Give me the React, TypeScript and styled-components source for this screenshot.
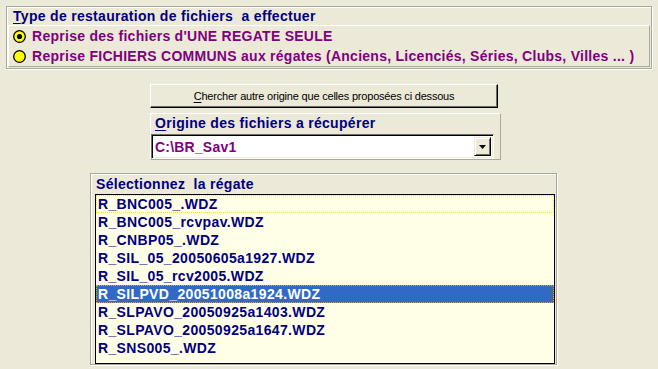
import React, { FC } from 'react';
import styled, { createGlobalStyle } from 'styled-components';

const Colors = {
    face: '#ECE9D8',
    shadow: '#ACA899',
    dark: '#716F64',
    white: '#FFFFFF',
    navy: '#000080',
    purple: '#800080',
    listBg: '#FFFFE8',
    select: '#316AC5',
};

const GlobalStyle = createGlobalStyle`
    html, body {
        margin:0;
        padding:0;
        background:${Colors.face};
    }
    * {
        box-sizing:border-box;
    }
`;

const Page = styled.div`
    width:658px;
    height:369px;
    background-color:${Colors.face};
    padding:6px 0 0 6px;
    display:flex;
    flex-direction:column;
    font-family:"Liberation Sans", Arial, sans-serif;
    overflow:hidden;
`;

const Etched = styled.div<{ $w: number; $h: number; $left?: number; $top?: number }>`
    width:${p => p.$w}px;
    height:${p => p.$h}px;
    margin-left:${p => p.$left || 0}px;
    margin-top:${p => p.$top || 0}px;
    border:1px solid ${Colors.shadow};
    box-shadow:1px 1px 0 ${Colors.white}, inset 1px 1px 0 ${Colors.white};
    display:flex;
    flex-direction:column;
    flex-shrink:0;
`;

const Raised = styled.div<{ $w: number; $h: number; $left?: number; $top?: number }>`
    width:${p => p.$w}px;
    height:${p => p.$h}px;
    margin-left:${p => p.$left || 0}px;
    margin-top:${p => p.$top || 0}px;
    border-top:1px solid ${Colors.white};
    border-left:1px solid ${Colors.white};
    border-right:1px solid ${Colors.shadow};
    border-bottom:1px solid ${Colors.shadow};
    display:flex;
    flex-direction:column;
    flex-shrink:0;
`;

const GroupTitle = styled.div<{ $left: number; $top: number }>`
    margin:${p => p.$top}px 0 0 ${p => p.$left}px;
    height:14px;
    line-height:14px;
    font-size:14px;
    letter-spacing:0.3px;
    font-weight:bold;
    color:${Colors.navy};
    white-space:pre;
    u {
        text-decoration-thickness:1px;
        text-underline-offset:2px;
    }
`;

const RadioRow = styled.div`
    height:20px;
    display:flex;
    align-items:center;
    gap:6px;
    padding-left:4px;
    font-size:14px;
    letter-spacing:0.27px;
    font-weight:bold;
    color:${Colors.purple};
    white-space:pre;
`;

const PushButton = styled.div`
    width:348px;
    height:24px;
    margin:15px 0 0 144px;
    background:${Colors.face};
    border-top:1px solid ${Colors.white};
    border-left:1px solid ${Colors.white};
    border-right:1px solid #000;
    border-bottom:1px solid #000;
    box-shadow:inset -1px -1px 0 ${Colors.dark};
    display:flex;
    align-items:center;
    justify-content:center;
    font-size:11px;
    letter-spacing:-0.2px;
    color:#000;
    flex-shrink:0;
    white-space:pre;
    u {
        text-underline-offset:2px;
    }
`;

const Combo = styled.div`
    width:343px;
    height:25px;
    margin:4px 0 0 0;
    background:${Colors.white};
    border-top:1px solid ${Colors.dark};
    border-left:1px solid ${Colors.dark};
    border-right:1px solid ${Colors.white};
    border-bottom:1px solid ${Colors.white};
    box-shadow:inset 1px 1px 0 #000, inset -1px -1px 0 ${Colors.face};
    display:flex;
    align-items:center;
    padding:0 2px 0 3px;
    font-size:14px;
    letter-spacing:0.2px;
    font-weight:bold;
    color:${Colors.purple};
`;

const ComboText = styled.span`
    flex:1;
`;

const DropButton = styled.div`
    width:17px;
    height:19px;
    background:${Colors.face};
    border-top:1px solid ${Colors.face};
    border-left:1px solid ${Colors.face};
    border-right:1px solid #000;
    border-bottom:1px solid #000;
    box-shadow:inset 1px 1px 0 ${Colors.white}, inset -1px -1px 0 ${Colors.dark};
    display:flex;
    align-items:center;
    justify-content:center;
`;

const ListBox = styled.div`
    width:460px;
    height:172px;
    margin:3px 0 0 4px;
    border:1px solid #000;
    background:${Colors.listBg};
    display:flex;
    flex-direction:column;
`;

const ListItem = styled.div<{ $selected?: boolean; $focus?: boolean }>`
    height:18px;
    line-height:16px;
    padding-left:1px;
    font-size:14px;
    letter-spacing:0.35px;
    font-weight:bold;
    white-space:pre;
    color:${p => (p.$selected ? Colors.white : Colors.navy)};
    background:${p => (p.$selected ? Colors.select : 'transparent')};
    border:1px dotted ${p => (p.$selected ? '#E0A040' : p.$focus ? '#E8E840' : 'transparent')};
`;

const Radio: FC<{ checked?: boolean }> = ({ checked }) => (
    <svg width="13" height="13" viewBox="0 0 13 13">
        <circle cx="6.5" cy="6.5" r="5.8" fill="#FFFF00" stroke="#000" strokeWidth="1.3" />
        {checked && <circle cx="6.5" cy="6.5" r="2.6" fill="#000" />}
    </svg>
);

const ArrowDown: FC = () => (
    <svg width="7" height="4" viewBox="0 0 7 4">
        <polygon points="0,0 7,0 3.5,4" fill="#000" />
    </svg>
);

const files = [
    'R_BNC005_.WDZ',
    'R_BNC005_rcvpav.WDZ',
    'R_CNBP05_.WDZ',
    'R_SIL_05_20050605a1927.WDZ',
    'R_SIL_05_rcv2005.WDZ',
    'R_SILPVD_20051008a1924.WDZ',
    'R_SLPAVO_20050925a1403.WDZ',
    'R_SLPAVO_20050925a1647.WDZ',
    'R_SNS005_.WDZ',
];

const App: FC = () => {
    return (
        <>
            <GlobalStyle />
            <Page>
                <Etched $w={646} $h={63}>
                    <GroupTitle $left={6} $top={2}>
                        <u>T</u>ype de restauration de fichiers  a effectuer
                    </GroupTitle>
                    <Raised $w={642} $h={42} $left={1} $top={2}>
                        <RadioRow>
                            <Radio checked />
                            Reprise des fichiers d'UNE REGATE SEULE
                        </RadioRow>
                        <RadioRow>
                            <Radio />
                            Reprise FICHIERS COMMUNS aux régates (Anciens, Licenciés, Séries, Clubs, Villes ... )
                        </RadioRow>
                    </Raised>
                </Etched>

                <PushButton>
                    <span><u>C</u>hercher autre origine que celles proposées ci dessous</span>
                </PushButton>

                <Raised $w={351} $h={47} $left={144} $top={5}>
                    <GroupTitle $left={4} $top={2}>
                        <u>O</u>rigine des fichiers a récupérer
                    </GroupTitle>
                    <Combo>
                        <ComboText>C:\BR_Sav1</ComboText>
                        <DropButton>
                            <ArrowDown />
                        </DropButton>
                    </Combo>
                </Raised>

                <Etched $w={467} $h={192} $left={84} $top={13}>
                    <GroupTitle $left={5} $top={3}>
                        Sélectionnez  la régate
                    </GroupTitle>
                    <ListBox>
                        {files.map((f, i) => (
                            <ListItem key={f} $selected={i === 5} $focus={i === 0}>
                                {f}
                            </ListItem>
                        ))}
                    </ListBox>
                </Etched>
            </Page>
        </>
    );
};

export default App;
